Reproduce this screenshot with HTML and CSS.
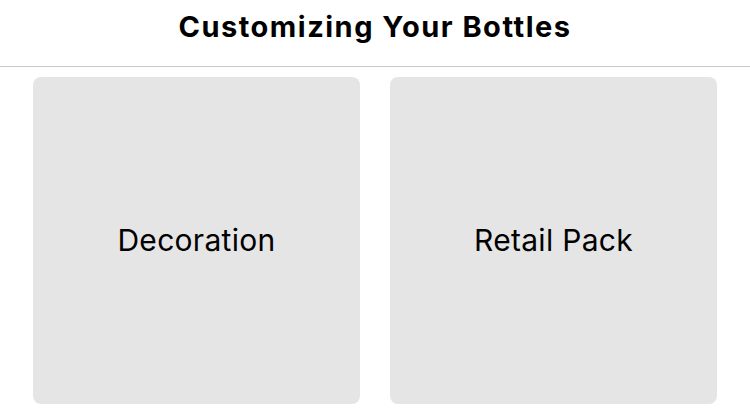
FILE: index.html
```html
<!DOCTYPE html>
<html>
<head>
<meta charset="utf-8">
<link rel="stylesheet" href="styles.css">
</head>
<body>
<header class="header">
  <h1 class="title">Customizing Your Bottles</h1>
</header>
<main class="grid">
  <div class="card">Decoration</div>
  <div class="card">Retail Pack</div>
</main>
</body>
</html>
```
FILE: styles.css
```css
html, body {
  margin: 0;
  padding: 0;
  background: #ffffff;
  font-family: Inter, "Noto Sans", sans-serif;
  color: #000;
}
.header {
  height: 67px;
  border-bottom: 1px solid #c8c8c8;
  display: flex;
  align-items: center;
  justify-content: center;
  box-sizing: border-box;
}
.title {
  margin: 0;
  font-size: 29px;
  font-weight: 700;
  letter-spacing: 1.5px;
  padding-bottom: 14px;
}
.grid {
  display: grid;
  grid-template-columns: 327px 327px;
  gap: 30px;
  padding: 10px 33px 0 33px;
}
.card {
  height: 327px;
  background: #e5e5e5;
  border-radius: 8px;
  display: flex;
  align-items: center;
  justify-content: center;
  font-size: 30px;
  font-weight: 400;
  letter-spacing: 0.3px;
  padding-bottom: 2px;
  box-sizing: border-box;
}
```
